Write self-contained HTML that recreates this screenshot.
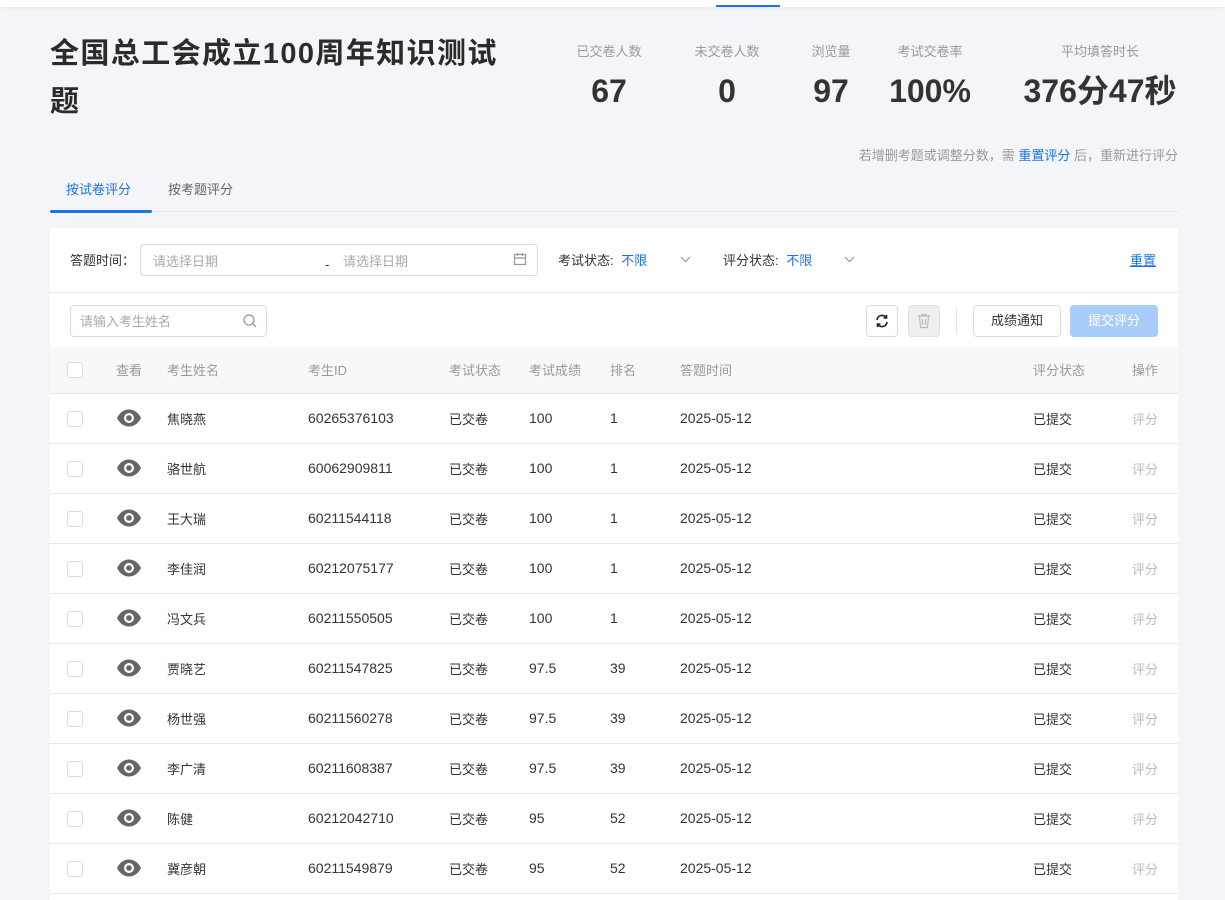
<!DOCTYPE html>
<html><head><meta charset="utf-8"><style>
*{margin:0;padding:0;box-sizing:border-box}
html,body{width:1225px;height:900px;overflow:hidden}
body{background:#f4f5f9;font-family:"Liberation Sans","Noto Sans CJK SC",sans-serif;color:#333;position:relative}
.abs{position:absolute}
.top{left:0;top:0;width:1225px;height:7px;background:#fff;box-shadow:0 1px 3px rgba(0,0,0,.06)}
h1{position:absolute;left:50px;top:30px;width:465px;font-size:29px;line-height:48px;font-weight:bold;color:#2b2b2b;word-break:break-all;letter-spacing:1.4px}
.stat{position:absolute;top:43px;text-align:center;transform:translateX(-50%)}
.stat .l{font-size:13px;line-height:18px;color:#999;white-space:nowrap}
.stat .v{font-size:32px;line-height:36px;font-weight:bold;color:#333;margin-top:12px;white-space:nowrap}
.card{left:50px;top:228px;width:1128px;height:672px;background:#fff}
.t{font-size:13px;line-height:18px;white-space:nowrap}
.row{position:absolute;left:50px;width:1128px;height:50px;border-bottom:1px solid #e8e8e8;background:#fff}
.row span{position:absolute;top:15px;line-height:18px;font-size:14px;color:#333;white-space:nowrap}
.row span.c{font-size:13px;top:17px}
.cb{position:absolute;left:17px;top:17px;width:16px;height:16px;border:1px solid #dcdcdc;border-radius:3px;background:#fff}
</style></head><body>
<div class="abs top"></div>
<div class="abs" style="left:716px;top:5px;width:64px;height:2px;background:#1a73e8"></div>
<h1>全国总工会成立100周年知识测试题</h1>
<div class="stat" style="left:609px"><div class="l">已交卷人数</div><div class="v">67</div></div>
<div class="stat" style="left:727px"><div class="l">未交卷人数</div><div class="v">0</div></div>
<div class="stat" style="left:831px"><div class="l">浏览量</div><div class="v">97</div></div>
<div class="stat" style="left:930px"><div class="l">考试交卷率</div><div class="v">100%</div></div>
<div class="stat" style="left:1100px"><div class="l">平均填答时长</div><div class="v">376分47秒</div></div>
<div class="abs t" style="right:47px;top:147px;color:#999">若增删考题或调整分数，需 <span style="color:#1a73e8">重置评分</span> 后，重新进行评分</div>
<div class="abs t" style="left:66px;top:181px;color:#1a73e8">按试卷评分</div>
<div class="abs t" style="left:168px;top:181px;color:#666">按考题评分</div>
<div class="abs" style="left:50px;top:211px;width:1128px;height:1px;background:#e4e4e4"></div>
<div class="abs" style="left:50px;top:210px;width:102px;height:3px;background:#1a73e8;border-radius:2px"></div>
<div class="abs card"></div>
<div class="abs t" style="left:70px;top:252px;color:#333">答题时间：</div>
<div class="abs" style="left:140px;top:244px;width:398px;height:32px;border:1px solid #dcdcdc;border-radius:4px"></div>
<div class="abs t" style="left:153px;top:253px;color:#aaa">请选择日期</div>
<div class="abs t" style="left:325px;top:256px;color:#333">-</div>
<div class="abs t" style="left:343px;top:253px;color:#aaa">请选择日期</div>
<svg class="abs" style="left:513px;top:252px" width="14" height="14" viewBox="0 0 14 14" fill="none" stroke="#999" stroke-width="1.2"><rect x="1.5" y="2.5" width="11" height="10"/><path d="M1.5 6h11M4.5 1v3M9.5 1v3"/></svg>
<div class="abs t" style="left:558px;top:252px;color:#333">考试状态: <span style="color:#1a73e8;margin-left:4px">不限</span></div>
<svg class="abs" style="left:680px;top:255px" width="11" height="8" viewBox="0 0 11 8" fill="none" stroke="#999" stroke-width="1.2"><path d="M1 2l4.5 4.5L10 2"/></svg>
<div class="abs t" style="left:723px;top:252px;color:#333">评分状态: <span style="color:#1a73e8;margin-left:4px">不限</span></div>
<svg class="abs" style="left:844px;top:255px" width="11" height="8" viewBox="0 0 11 8" fill="none" stroke="#999" stroke-width="1.2"><path d="M1 2l4.5 4.5L10 2"/></svg>
<div class="abs t" style="left:1130px;top:252px;color:#1a73e8;text-decoration:underline">重置</div>
<div class="abs" style="left:50px;top:292px;width:1128px;height:1px;background:#e8e8e8"></div>
<div class="abs" style="left:70px;top:305px;width:197px;height:32px;border:1px solid #dcdcdc;border-radius:4px"></div>
<div class="abs t" style="left:80px;top:313px;color:#aaa">请输入考生姓名</div>
<svg class="abs" style="left:242px;top:313px" width="16" height="16" viewBox="0 0 16 16" fill="none" stroke="#999" stroke-width="1.3"><circle cx="7" cy="7" r="5"/><path d="M10.5 10.5l3.5 3.5"/></svg>
<div class="abs" style="left:866px;top:305px;width:32px;height:32px;border:1px solid #dcdcdc;border-radius:4px"></div>
<svg class="abs" style="left:874px;top:313px" width="16" height="16" viewBox="0 0 16 16" fill="none" stroke="#222" stroke-width="1.6"><path d="M3 7a5 5 0 0 1 9-2.5M13 9a5 5 0 0 1-9 2.5"/><path d="M12.5 2v3h-3M3.5 14v-3h3"/></svg>
<div class="abs" style="left:908px;top:305px;width:32px;height:32px;border:1px solid #e0e0e0;border-radius:4px;background:#efefef"></div>
<svg class="abs" style="left:917px;top:313px" width="14" height="16" viewBox="0 0 14 16" fill="none" stroke="#bbb" stroke-width="1.2"><path d="M1 3h12M5 3V1.5h4V3M2.5 3l1 11.5h7L11.5 3M5.5 6v6M8.5 6v6"/></svg>
<div class="abs" style="left:956px;top:308px;width:1px;height:26px;background:#e4e4e4"></div>
<div class="abs" style="left:973px;top:305px;width:88px;height:32px;border:1px solid #dcdcdc;border-radius:4px;font-size:13px;text-align:center;line-height:30px">成绩通知</div>
<div class="abs" style="left:1070px;top:305px;width:88px;height:32px;border-radius:4px;background:#a8cdfb;color:#fff;font-size:13px;text-align:center;line-height:32px">提交评分</div>
<div class="abs" style="left:50px;top:347px;width:1128px;height:47px;background:#f8f8f8;border-bottom:1px solid #e4e4e4"></div>
<div class="cb" style="left:67px;top:362px"></div>
<div class="abs t" style="top:362px;left:116px;color:#999">查看</div>
<div class="abs t" style="top:362px;left:167px;color:#999">考生姓名</div>
<div class="abs t" style="top:362px;left:308px;color:#999">考生ID</div>
<div class="abs t" style="top:362px;left:449px;color:#999">考试状态</div>
<div class="abs t" style="top:362px;left:529px;color:#999">考试成绩</div>
<div class="abs t" style="top:362px;left:610px;color:#999">排名</div>
<div class="abs t" style="top:362px;left:680px;color:#999">答题时间</div>
<div class="abs t" style="top:362px;left:1033px;color:#999">评分状态</div>
<div class="abs t" style="top:362px;left:1132px;color:#999">操作</div>
<div id="rows"></div>
<script>
var d=[["焦晓燕","60265376103","100","1"],["骆世航","60062909811","100","1"],["王大瑞","60211544118","100","1"],["李佳润","60212075177","100","1"],["冯文兵","60211550505","100","1"],["贾晓艺","60211547825","97.5","39"],["杨世强","60211560278","97.5","39"],["李广清","60211608387","97.5","39"],["陈健","60212042710","95","52"],["冀彦朝","60211549879","95","52"],["张三","60211549880","95","52"]];
var h="";d.forEach(function(r,i){var y=394+i*50;
h+='<div class="row" style="top:'+y+'px"><div class="cb"></div>'+
'<svg style="position:absolute;left:66px;top:15px" width="26" height="18" viewBox="0 0 26 18"><path d="M1 9C4 3 8.5 0.5 13 0.5S22 3 25 9C22 15 17.5 17.5 13 17.5S4 15 1 9Z" fill="#666"/><circle cx="13" cy="9" r="5" fill="#fff"/><circle cx="13" cy="9" r="2.8" fill="#666"/></svg>'+
'<span class="c" style="left:117px">'+r[0]+'</span><span style="left:258px">'+r[1]+'</span><span class="c" style="left:399px">已交卷</span><span style="left:479px">'+r[2]+'</span><span style="left:560px">'+r[3]+'</span><span style="left:630px">2025-05-12</span><span class="c" style="left:983px">已提交</span><span class="c" style="left:1082px;color:#bbb">评分</span></div>';});
document.getElementById("rows").innerHTML=h;
</script>
</body></html>
